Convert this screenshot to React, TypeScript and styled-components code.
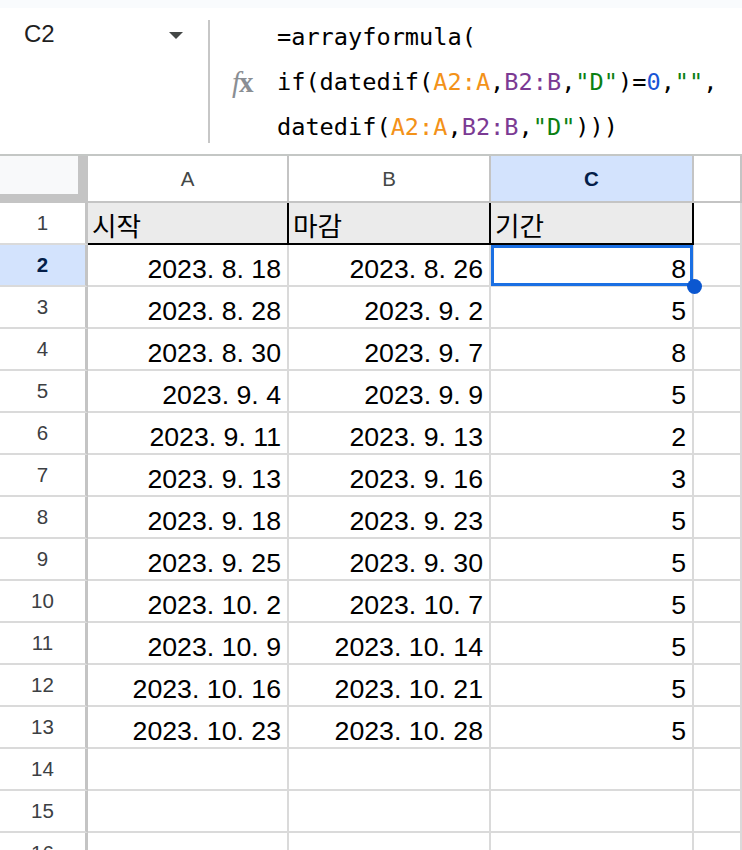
import React from "react";
import styled, { createGlobalStyle } from "styled-components";

const GlobalStyle = createGlobalStyle`
  html, body {
    margin: 0;
    padding: 0;
    overflow: hidden;
    background: #ffffff;
  }
  * {
    box-sizing: border-box;
  }
`;

const Page = styled.div`
  width: 100%;
  height: 100vh;
  overflow: hidden;
  background: #ffffff;
  font-family: "Liberation Sans", Arial, "Noto Sans CJK KR", sans-serif;
`;

const TopStrip = styled.div`
  height: 8px;
  background: #f9fbfd;
`;

const FormulaBar = styled.div`
  display: flex;
  height: 148px;
  border-bottom: 2px solid #c4c7c5;
`;

const NameBox = styled.div`
  width: 208px;
  display: flex;
  align-items: flex-start;
  justify-content: space-between;
  padding: 12px 25px 0 24px;
  font-size: 24px;
  line-height: 28px;
  color: #1f1f1f;
`;

const Caret = styled.span`
  width: 0;
  height: 0;
  margin-top: 12px;
  border-left: 7.5px solid transparent;
  border-right: 7.5px solid transparent;
  border-top: 7px solid #444746;
`;

const Divider = styled.div`
  width: 2px;
  margin: 12px 0 11px;
  background: #c7c7c7;
`;

const FormulaArea = styled.div`
  flex: 1;
  display: flex;
`;

const FxSlot = styled.div`
  width: 67px;
  display: flex;
  align-items: center;
  padding-left: 22px;
  padding-top: 2px;
`;

const Fx = styled.span`
  font-family: "Liberation Serif", "DejaVu Serif", serif;
  font-size: 29px;
  color: #8a8e93;
  i {
    font-style: italic;
    margin-right: -1px;
  }
  b {
    font-weight: 700;
  }
`;

const Lines = styled.div`
  padding-top: 7px;
  font-family: "DejaVu Sans Mono", "Liberation Mono", monospace;
  font-size: 23.6px;
  line-height: 45px;
  color: #000000;
  white-space: pre;
`;

const Tok = styled.span<{ $c: string }>`
  color: ${(p) => p.$c};
`;

const Sheet = styled.div`
  display: grid;
  grid-template-columns: 88px 201px 202px 203px 1fr;
  grid-template-rows: 47px;
  grid-auto-rows: 42px;
`;

const Corner = styled.div`
  background: #f8f9fa;
  border-right: 10px solid #c4c4c4;
  border-bottom: 9px solid #c4c4c4;
`;

const ColHeader = styled.div<{ $active?: boolean }>`
  display: flex;
  align-items: center;
  justify-content: center;
  font-size: 20.5px;
  font-weight: ${(p) => (p.$active ? 700 : 400)};
  color: ${(p) => (p.$active ? "#041e49" : "#444746")};
  background: ${(p) => (p.$active ? "#d3e3fd" : "#ffffff")};
  border-right: 2px solid #c4c4c4;
  border-bottom: 2px solid #c4c4c4;
`;

const RowHeader = styled.div<{ $active?: boolean }>`
  display: flex;
  align-items: center;
  justify-content: center;
  font-size: 20.5px;
  font-weight: ${(p) => (p.$active ? 700 : 400)};
  color: ${(p) => (p.$active ? "#041e49" : "#3c4043")};
  background: ${(p) => (p.$active ? "#d3e3fd" : "#ffffff")};
  border-right: 3px solid #c4c4c4;
  border-bottom: 2px solid #dadada;
`;

const Cell = styled.div<{ $head?: boolean; $left?: boolean }>`
  position: relative;
  display: flex;
  align-items: flex-end;
  justify-content: ${(p) => (p.$left ? "flex-start" : "flex-end")};
  padding: 0 6px 2px 4px;
  font-size: 26.7px;
  line-height: 1;
  color: #000000;
  white-space: nowrap;
  background: ${(p) => (p.$head ? "#ebebeb" : "#ffffff")};
  border-right: 2px solid ${(p) => (p.$head ? "#000000" : "#dadada")};
  border-bottom: 2px solid ${(p) => (p.$head ? "#000000" : "#dadada")};
`;

const Selection = styled.div`
  position: absolute;
  top: 0;
  left: 0;
  right: -1px;
  bottom: -1px;
  border: 3px solid #1a6fe3;
  pointer-events: none;
`;

const Handle = styled.div`
  position: absolute;
  right: -10px;
  bottom: -9px;
  width: 15px;
  height: 15px;
  border-radius: 50%;
  background: #0b57d0;
  z-index: 2;
`;

const rows: [string, string, string][] = [
  ["2023. 8. 18", "2023. 8. 26", "8"],
  ["2023. 8. 28", "2023. 9. 2", "5"],
  ["2023. 8. 30", "2023. 9. 7", "8"],
  ["2023. 9. 4", "2023. 9. 9", "5"],
  ["2023. 9. 11", "2023. 9. 13", "2"],
  ["2023. 9. 13", "2023. 9. 16", "3"],
  ["2023. 9. 18", "2023. 9. 23", "5"],
  ["2023. 9. 25", "2023. 9. 30", "5"],
  ["2023. 10. 2", "2023. 10. 7", "5"],
  ["2023. 10. 9", "2023. 10. 14", "5"],
  ["2023. 10. 16", "2023. 10. 21", "5"],
  ["2023. 10. 23", "2023. 10. 28", "5"],
];

const ORANGE = "#f39219";
const PURPLE = "#7b3a93";
const GREEN = "#0b8012";
const BLUE = "#1a55d6";

export default function App() {
  return (
    <Page>
      <GlobalStyle />
      <TopStrip />
      <FormulaBar>
        <NameBox>
          C2
          <Caret />
        </NameBox>
        <Divider />
        <FormulaArea>
          <FxSlot>
            <Fx>
              <i>f</i>
              <b>x</b>
            </Fx>
          </FxSlot>
          <Lines>
            <div>=arrayformula(</div>
            <div>
              if(datedif(<Tok $c={ORANGE}>A2:A</Tok>,<Tok $c={PURPLE}>B2:B</Tok>,
              <Tok $c={GREEN}>"D"</Tok>)=<Tok $c={BLUE}>0</Tok>,<Tok $c={GREEN}>""</Tok>,
            </div>
            <div>
              datedif(<Tok $c={ORANGE}>A2:A</Tok>,<Tok $c={PURPLE}>B2:B</Tok>,
              <Tok $c={GREEN}>"D"</Tok>)))
            </div>
          </Lines>
        </FormulaArea>
      </FormulaBar>
      <Sheet>
        <Corner />
        <ColHeader>A</ColHeader>
        <ColHeader>B</ColHeader>
        <ColHeader $active>C</ColHeader>
        <ColHeader />

        <RowHeader>1</RowHeader>
        <Cell $head $left>시작</Cell>
        <Cell $head $left>마감</Cell>
        <Cell $head $left>기간</Cell>
        <Cell />

        {rows.map((r, i) => (
          <React.Fragment key={i}>
            <RowHeader $active={i === 0}>{i + 2}</RowHeader>
            <Cell>{r[0]}</Cell>
            <Cell>{r[1]}</Cell>
            <Cell>
              {r[2]}
              {i === 0 && (
                <>
                  <Selection />
                  <Handle />
                </>
              )}
            </Cell>
            <Cell />
          </React.Fragment>
        ))}

        {[14, 15, 16].map((n) => (
          <React.Fragment key={n}>
            <RowHeader>{n}</RowHeader>
            <Cell />
            <Cell />
            <Cell />
            <Cell />
          </React.Fragment>
        ))}
      </Sheet>
    </Page>
  );
}
